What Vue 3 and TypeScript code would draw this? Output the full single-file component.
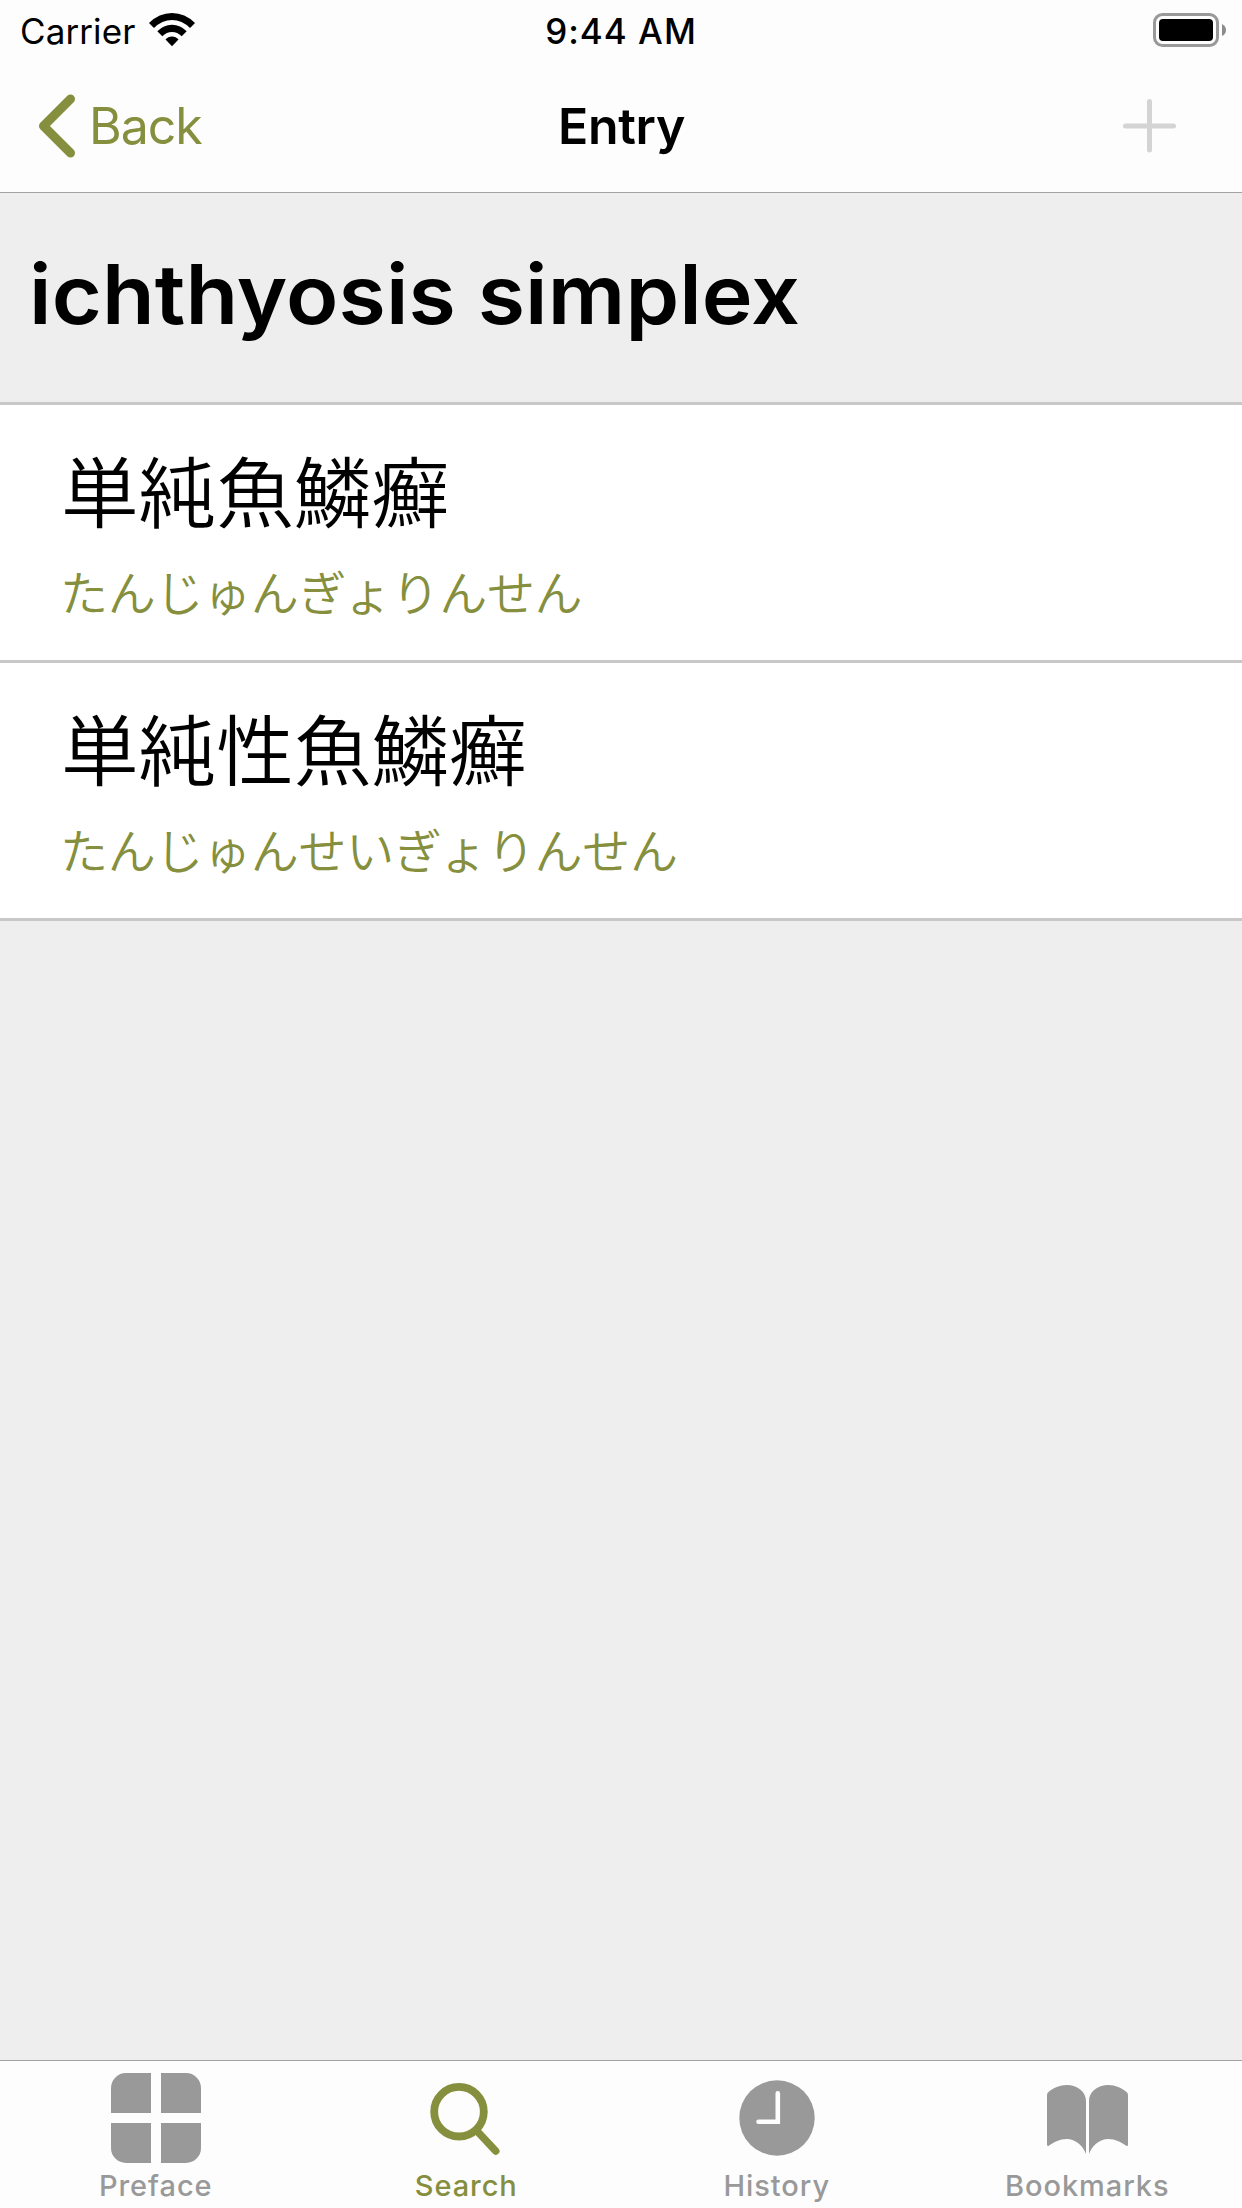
<script setup lang="ts">
interface Translation {
  term: string
  reading: string
}

interface Tab {
  id: 'preface' | 'search' | 'history' | 'bookmarks'
  label: string
}

const headword = 'ichthyosis simplex'

const translations: Translation[] = [
  { term: '単純魚鱗癬', reading: 'たんじゅんぎょりんせん' },
  { term: '単純性魚鱗癬', reading: 'たんじゅんせいぎょりんせん' },
]

const tabs: Tab[] = [
  { id: 'preface', label: 'Preface' },
  { id: 'search', label: 'Search' },
  { id: 'history', label: 'History' },
  { id: 'bookmarks', label: 'Bookmarks' },
]

const activeTab: Tab['id'] = 'search'
</script>

<template>
  <div class="screen">
    <header class="top">
      <div class="status">
        <div class="status-left">
          <span class="carrier">Carrier</span>
          <svg class="wifi" width="46" height="34" viewBox="0 0 46 34">
            <path d="M0 10Q10 0 23 0T46 10L41 15Q33 7 23 7T5 15Z" />
            <path d="M8.3 18.3Q14.5 11.7 23 11.7T37.7 18.3L32.7 23.3Q28.5 19 23 19T13.3 23.3Z" />
            <path d="M16.5 26.5Q19 23.5 23 23.5T29.5 26.5L23 33.3Z" />
          </svg>
        </div>
        <span class="time">9:44 AM</span>
        <div class="status-right">
          <svg width="74" height="34" viewBox="0 0 74 34">
            <rect x="1.5" y="1.5" width="63" height="31" rx="8" fill="none" stroke="#999" stroke-width="3" />
            <rect x="6" y="6" width="54" height="22" rx="4" />
            <path d="M69 11Q73 13 73 17T69 23Z" fill="#8c8c8c" />
          </svg>
        </div>
      </div>
      <nav class="nav">
        <div class="back">
          <svg width="38" height="64" viewBox="0 0 38 64">
            <path d="M32.5 5L5.5 32L32.5 59" fill="none" stroke="#858f3d" stroke-width="9" stroke-linecap="round" stroke-linejoin="round" />
          </svg>
          <span class="back-label">Back</span>
        </div>
        <span class="title">Entry</span>
        <div class="add">
          <svg width="54" height="54" viewBox="0 0 54 54">
            <path d="M2.5 27H50.5M26.5 2.5V51" fill="none" stroke="#d4d4d4" stroke-width="5" stroke-linecap="round" />
          </svg>
        </div>
      </nav>
    </header>

    <main class="content">
      <h1 class="headword"><span>{{ headword }}</span></h1>
      <section v-for="item in translations" :key="item.term" class="entry" lang="ja">
        <div class="term">{{ item.term }}</div>
        <div class="reading">{{ item.reading }}</div>
      </section>
    </main>

    <footer class="tabs">
      <div v-for="tab in tabs" :key="tab.id" class="tab" :class="[tab.id, { active: tab.id === activeTab }]">
        <svg class="icon" width="90" height="90" viewBox="0 0 90 90">
          <path
            v-if="tab.id === 'preface'"
            d="M15 0H40V40H0V15A15 15 0 0 1 15 0ZM50 0H75A15 15 0 0 1 90 15V40H50ZM0 50H40V90H15A15 15 0 0 1 0 75ZM50 50H90V75A15 15 0 0 1 75 90H50Z"
          />
          <g v-else-if="tab.id === 'search'" fill="none" stroke="currentColor">
            <circle cx="38" cy="38.7" r="24.8" stroke-width="7.8" />
            <path d="M56 58L74.7 78" stroke-width="7.6" stroke-linecap="round" />
          </g>
          <template v-else-if="tab.id === 'history'">
            <circle cx="46" cy="45" r="37.7" />
            <path d="M46.8 20.3V48.7H27.500" fill="none" stroke="#fdfdfd" stroke-width="4.6" stroke-linecap="round" />
          </template>
          <path
            v-else
            d="M5 22Q5 20 6.5 19C11 15 18 12 24.5 12C36 12 44 19 44 28V81C41 73 34 66 24.5 66C18 66 12 69 6.5 73Q5 73 5 72ZM47 81V28C47 19 55 12 66.500 12C73 12 80 15 84.500 19Q86 20 86 22V72Q86 73 84.500 73C79 69 73 66 66.500 66C57 66 50 73 47 81Z"
          />
        </svg>
        <span class="label">{{ tab.label }}</span>
      </div>
    </footer>
  </div>
</template>

<style>
body {
  margin: 0;
}
</style>

<style scoped>
.screen {
  display: flex;
  flex-direction: column;
  width: 1242px;
  height: 2208px;
  overflow: hidden;
  background: #eee;
  color: #000;
  font-family: Inter, 'Liberation Sans', sans-serif;
  white-space: nowrap;
}

svg {
  display: block;
  flex: none;
}

.top {
  box-sizing: border-box;
  height: 193px;
  background: #fdfdfd;
  border-bottom: 1px solid #a3a3a3;
}

.status,
.nav {
  display: grid;
  grid-template-columns: 1fr auto 1fr;
  align-items: center;
}

.status {
  height: 62px;
  font-size: 35px;
  line-height: 62px;
}

.status-left {
  display: flex;
  align-items: flex-start;
  padding-left: 20px;
}

.carrier {
  width: 129px;
  letter-spacing: 0.1px;
}

.wifi {
  margin-top: 13px;
}

.time {
  font-weight: 550;
  letter-spacing: 1px;
}

.status-right {
  display: flex;
  justify-content: flex-end;
  padding: 0 15px 2px 0;
}

.nav {
  height: 128px;
  font-size: 50px;
  line-height: 128px;
}

.back {
  display: flex;
  align-items: center;
  gap: 13px;
  padding-left: 38px;
  color: #858f3d;
}

.back-label {
  letter-spacing: -1px;
}

.title {
  padding-left: 1px;
  font-weight: 600;
  letter-spacing: -0.3px;
}

.add {
  display: flex;
  justify-content: flex-end;
  padding-right: 65px;
}

.content {
  flex: 1;
}

.headword {
  display: flex;
  align-items: center;
  box-sizing: border-box;
  height: 212px;
  margin: 0;
  padding: 0 0 5px 29px;
  border-bottom: 3px solid #c8c8c8;
  font-size: 82px;
  font-weight: 600;
  line-height: 100px;
}

.headword span {
  letter-spacing: 0.1px;
  transform: scaleX(1.05);
  transform-origin: left center;
}

.entry {
  display: flex;
  flex-direction: column;
  box-sizing: border-box;
  height: 258px;
  padding: 25px 0 0 61px;
  background: #fff;
  border-bottom: 3px solid #c8c8c8;
  font-family: 'Noto Sans CJK JP', sans-serif;
  font-weight: 350;
}

.term {
  font-size: 77.6px;
  line-height: 116px;
}

.reading {
  margin: 2px 0 0 -1px;
  color: #858f3d;
  font-size: 48px;
  line-height: 84px;
  letter-spacing: -0.3px;
}

.tabs {
  display: grid;
  grid-template-columns: repeat(4, 1fr);
  box-sizing: border-box;
  height: 148px;
  padding-top: 12px;
  background: #fdfdfd;
  border-top: 1px solid #a3a3a3;
}

.tab {
  display: flex;
  flex-direction: column;
  align-items: center;
  color: #999;
}

.tab.active {
  color: #858f3d;
}

.icon {
  fill: currentColor;
}

.preface .icon {
  margin-left: 1.5px;
}

.label {
  margin-top: 4px;
  padding-left: 1px;
  font-size: 29px;
  font-weight: 460;
  line-height: 38px;
  letter-spacing: 0.95px;
}
</style>
